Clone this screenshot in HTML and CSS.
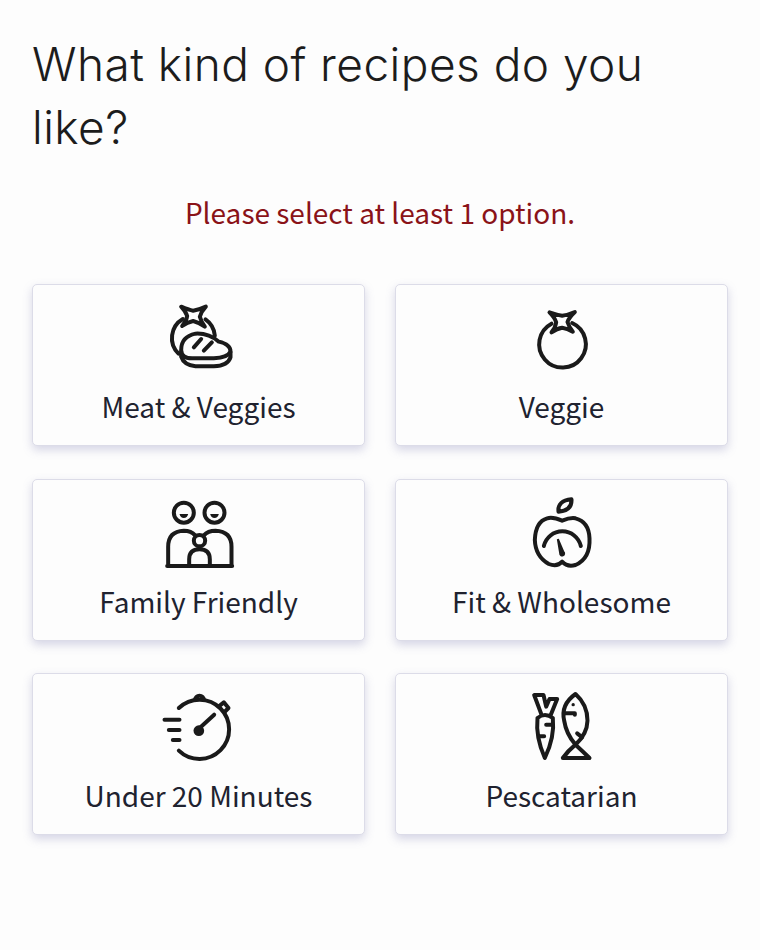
FILE: index.html
```html
<!DOCTYPE html>
<html lang="en">
<head>
<meta charset="utf-8">
<title>Recipes</title>
<link rel="stylesheet" href="styles.css">
</head>
<body>
<main class="page">
  <h1 class="title">What kind of recipes do you like?</h1>
  <p class="error">Please select at least 1 option.</p>
  <div class="grid">
    <button class="card">
      <svg class="icon" viewBox="-4.5 0 300 255">
        <path d="M92 35Q115 45 128 47Q145 45 166 35Q152 50 148 65Q152 80 163 95Q145 82 128 78Q110 82 95 93Q108 78 110 63Q106 50 92 35Z"/>
        <path d="M97 72A66 66 0 0 0 84 176M165 73A66 66 0 0 1 193 122"/>
        <path d="M92 165Q92 125 135 116Q175 114 205 140Q240 148 240 170Q232 188 190 190H125Q92 190 92 165Z"/>
        <path d="M92 170V185Q100 210 135 214H190Q232 212 240 187V172"/>
        <path d="M130 157L152 132M160 167L184 142"/>
      </svg>
      <span class="label">Meat &amp; Veggies</span>
    </button>
    <button class="card">
      <svg class="icon" viewBox="-10.5 0 300 255">
        <path d="M102 52Q125 60 140 62Q158 60 178 51Q160 68 156 81Q160 95 172 110Q155 100 140 98Q125 100 108 112Q120 98 122 82Q118 68 102 52Z"/>
        <path d="M108 86A70 70 0 1 0 170 84"/>
      </svg>
      <span class="label">Veggie</span>
    </button>
    <button class="card">
      <svg class="icon" viewBox="-4.5 0 300 255">
        <circle cx="100" cy="68" r="30"/>
        <circle cx="192" cy="68" r="30"/>
        <path class="solid" d="M87 72H113Q110 84 100 84Q90 84 87 72ZM179 72H205Q202 84 192 84Q182 84 179 72Z"/>
        <path d="M50 228H245M53 228V170Q53 124 100 122Q122 122 134 136M243 228V170Q243 124 195 122Q172 122 160 136"/>
        <circle cx="147" cy="152" r="17"/>
        <path d="M116 228V208Q116 178 147 178Q178 178 178 208V228"/>
      </svg>
      <span class="label">Family Friendly</span>
    </button>
    <button class="card">
      <svg class="icon" viewBox="-10.5 0 300 255">
        <path d="M129 65Q125 32 168 28Q170 62 129 65Z"/>
        <path d="M140 92Q112 80 95 85Q60 95 58 150Q60 200 100 222Q125 232 140 215Q155 232 180 225Q225 205 222 145Q220 95 180 85Q165 82 140 92Z"/>
        <path d="M85 168A57 57 0 0 1 196 168"/>
        <path class="solid" d="M124 148L130 146L146 184A9 9 0 1 1 131 190Z"/>
      </svg>
      <span class="label">Fit &amp; Wholesome</span>
    </button>
    <button class="card">
      <svg class="icon" viewBox="-4.5 0 300 255">
        <path d="M85 72A89 89 0 1 1 85 200"/>
        <path d="M134 48A13 13 0 1 1 160 48"/>
        <path d="M205 67L220 55L234 72L222 84"/>
        <circle class="solid" cx="145" cy="140" r="16"/>
        <path d="M150 130L191 92M42 107H87M55 138H87M67 168H87"/>
      </svg>
      <span class="label">Under 20 Minutes</span>
    </button>
    <button class="card">
      <svg class="icon" viewBox="-10.5 0 300 255">
        <path d="M66 102Q88 84 112 102Q118 160 88 222Q60 160 66 102Z"/>
        <path d="M78 92L56 33H84L92 68L102 45H125L106 92M92 122H112M72 157H86"/>
        <path d="M180 30Q135 62 146 110Q152 150 180 182Q205 205 222 222H142Q158 200 180 182Q215 150 216 110Q216 62 180 30Z"/>
        <path d="M148 88H178V92M185 148L200 160"/>
        <circle class="solid" cx="173" cy="62" r="5"/>
      </svg>
      <span class="label">Pescatarian</span>
    </button>
  </div>
</main>
</body>
</html>
```
FILE: styles.css
```css
html, body {
  margin: 0;
  padding: 0;
  min-height: 100%;
  background: #fdfdfd;
}
.page {
  padding: 33px 32px 80px;
  font-family: "Noto Sans CJK JP", "Noto Sans", sans-serif;
}
.title {
  margin: 0;
  font-family: Inter, sans-serif;
  font-weight: 320;
  font-size: 46px;
  letter-spacing: 0.45px;
  line-height: 63px;
  color: #1c1c1c;
}
.error {
  margin: 33px 0 0;
  text-align: center;
  font-size: 28px;
  line-height: 40px;
  color: #8a1318;
}
.grid {
  display: grid;
  grid-template-columns: 1fr 1fr;
  column-gap: 30px;
  row-gap: 32.5px;
  margin-top: 52px;
}
.card {
  display: flex;
  flex-direction: column;
  align-items: center;
  height: 162px;
  padding: 10px 0 0;
  border: 1px solid #dcdce8;
  border-radius: 5px;
  background: #fdfdfd;
  box-shadow: 0 4px 10px rgba(110, 110, 170, 0.28);
  font: inherit;
  color: #20222f;
}
.icon {
  width: 100px;
  height: 85px;
  fill: none;
  stroke: #1a1a1a;
  stroke-width: 12;
  stroke-linejoin: round;
  stroke-linecap: round;
}
.icon .solid {
  fill: #1a1a1a;
  stroke: none;
}
.label {
  margin-top: 8px;
  font-size: 28px;
  line-height: 36px;
}
```
